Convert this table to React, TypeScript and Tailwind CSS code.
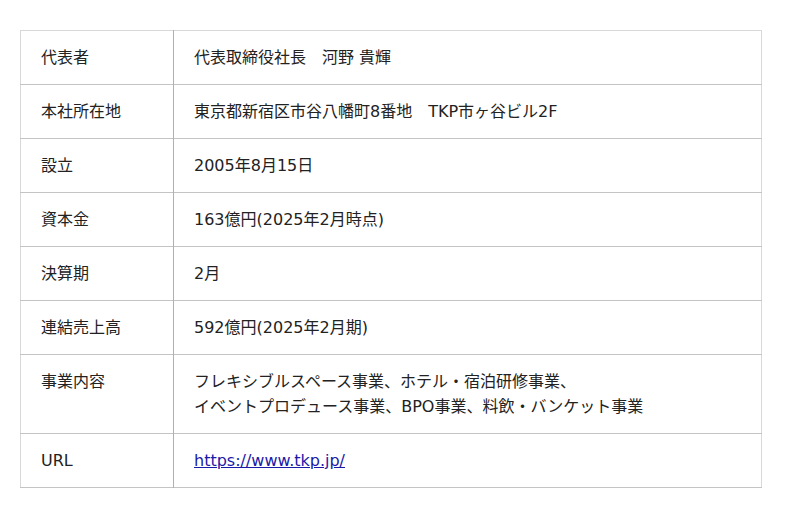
const rows: { label: string; value: React.ReactNode }[] = [
  { label: '代表者', value: '代表取締役社長　河野 貴輝' },
  { label: '本社所在地', value: '東京都新宿区市谷八幡町8番地　TKP市ヶ谷ビル2F' },
  { label: '設立', value: '2005年8月15日' },
  { label: '資本金', value: '163億円(2025年2月時点)' },
  { label: '決算期', value: '2月' },
  { label: '連結売上高', value: '592億円(2025年2月期)' },
  {
    label: '事業内容',
    value: (
      <>
        フレキシブルスペース事業、ホテル・宿泊研修事業、
        <br />
        イベントプロデュース事業、BPO事業、料飲・バンケット事業
      </>
    ),
  },
  {
    label: 'URL',
    value: (
      <a href="#" className="text-[#1a1aa8] underline">
        https://www.tkp.jp/
      </a>
    ),
  },
];

export default function App() {
  return (
    <div
      className="min-h-[518px] bg-white pl-[20px] pt-[30px] text-[16px] leading-[25px] text-[#222]"
      style={{ fontFamily: '"DejaVu Sans", "Noto Sans CJK JP", sans-serif' }}
    >
      <table className="w-[742px] border-collapse border border-[#d8d8d8]">
        <tbody>
          {rows.map((r) => (
            <tr key={r.label} className="border-b border-[#c4c4c4]">
              <td className="w-[153px] border-r border-[#b0b0b0] py-[14px] pl-[20px] align-top">
                {r.label}
              </td>
              <td className="py-[14px] pl-[20px] align-top">{r.value}</td>
            </tr>
          ))}
        </tbody>
      </table>
    </div>
  );
}
